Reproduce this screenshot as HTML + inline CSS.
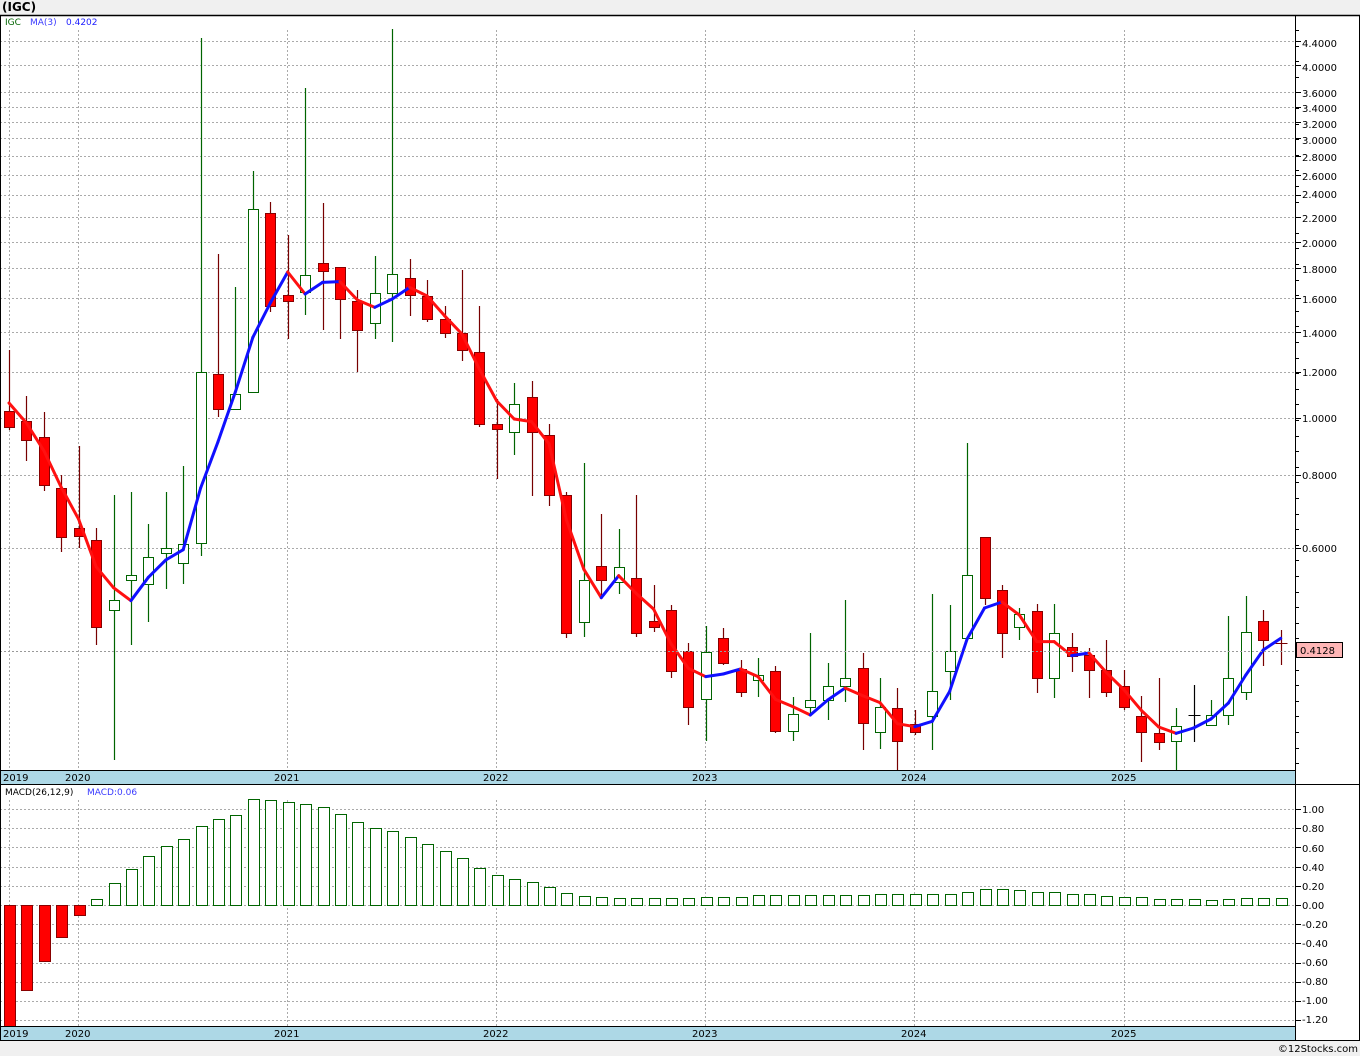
<!DOCTYPE html>
<html><head><meta charset="utf-8"><style>
html,body{margin:0;padding:0;background:#f0f0f0;width:1360px;height:1056px;overflow:hidden;font-family:"Liberation Sans",sans-serif}
svg{position:absolute;left:0;top:0}
text{font-family:"DejaVu Sans","Liberation Sans",sans-serif;font-size:10px}
</style></head><body>
<svg id="s" width="1360" height="1056" xmlns="http://www.w3.org/2000/svg">
<rect x="0" y="15" width="1360" height="1025" fill="#fff"/>
<text x="2" y="11" style="font-size:12px;font-weight:bold" fill="#000">(IGC)</text>
<g id="grid" stroke="#aaa" stroke-width="1" stroke-dasharray="2,2"></g>
<g id="cand"></g>
<g id="ma"></g>
<g id="macd"></g>
<line x1="0" y1="651.5" x2="1295" y2="651.5" stroke="#999" stroke-dasharray="2,2"/>
<rect x="0" y="770" width="1295" height="14" fill="#add8e6"/>
<rect x="0" y="1026" width="1295" height="14" fill="#add8e6"/>
<line x1="0" y1="770.5" x2="1295" y2="770.5" stroke="#000"/>
<line x1="0" y1="1026.5" x2="1295" y2="1026.5" stroke="#000"/>
<line x1="0" y1="15.5" x2="1360" y2="15.5" stroke="#000" stroke-width="1.5"/>
<line x1="0" y1="784.5" x2="1360" y2="784.5" stroke="#000"/>
<line x1="0" y1="1040.5" x2="1360" y2="1040.5" stroke="#000"/>
<line x1="1295.5" y1="15" x2="1295.5" y2="1040" stroke="#000"/>
<line x1="1359.5" y1="15" x2="1359.5" y2="1040" stroke="#000"/>
<line x1="0.5" y1="15" x2="0.5" y2="1040" stroke="#000"/>
<g id="ticks" stroke="#000"></g>
<g fill="#000">
<text x="1302" y="47">4.4000</text><text x="1302" y="71">4.0000</text><text x="1302" y="97">3.6000</text><text x="1302" y="112">3.4000</text><text x="1302" y="128">3.2000</text><text x="1302" y="144">3.0000</text><text x="1302" y="161">2.8000</text><text x="1302" y="180">2.6000</text><text x="1302" y="198">2.4000</text><text x="1302" y="222">2.2000</text><text x="1302" y="247">2.0000</text><text x="1302" y="273">1.8000</text><text x="1302" y="303">1.6000</text><text x="1302" y="337">1.4000</text><text x="1302" y="376">1.2000</text><text x="1302" y="422">1.0000</text><text x="1302" y="479">0.8000</text><text x="1302" y="552">0.6000</text>
<text x="1302" y="813">1.00</text><text x="1302" y="832">0.80</text><text x="1302" y="852">0.60</text><text x="1302" y="871">0.40</text><text x="1302" y="890">0.20</text><text x="1302" y="909">0.00</text><text x="1302" y="928">-0.20</text><text x="1302" y="947">-0.40</text><text x="1302" y="966">-0.60</text><text x="1302" y="985">-0.80</text><text x="1302" y="1004">-1.00</text><text x="1302" y="1023">-1.20</text>
<text x="3" y="781">2019</text><text x="65" y="781">2020</text><text x="274" y="781">2021</text><text x="483" y="781">2022</text><text x="692" y="781">2023</text><text x="901" y="781">2024</text><text x="1111" y="781">2025</text>
<text x="3" y="1037">2019</text><text x="65" y="1037">2020</text><text x="274" y="1037">2021</text><text x="483" y="1037">2022</text><text x="692" y="1037">2023</text><text x="901" y="1037">2024</text><text x="1111" y="1037">2025</text>
</g>
<rect x="1296.5" y="642.5" width="46" height="15" fill="#ffb6b6" stroke="#000"/>
<text x="1300" y="654" fill="#000">0.4128</text>
<text x="5" y="25" fill="#006400" style="font-size:9px">IGC</text>
<text x="30" y="25" fill="#3a3aff" style="font-size:9px">MA(3)</text>
<text x="66" y="25" fill="#2222ff" style="font-size:9px">0.4202</text>
<text x="5" y="795" fill="#000" style="font-size:9px">MACD(26,12,9)</text>
<text x="87" y="795" fill="#3a3aff" style="font-size:9px">MACD:0.06</text>
<text x="1358" y="1052" text-anchor="end" fill="#000" style="font-size:10px">©12Stocks.com</text>
</svg>
<script>
var NS="http://www.w3.org/2000/svg";
function el(p,t,a){var e=document.createElementNS(NS,t);for(var k in a)e.setAttribute(k,a[k]);document.getElementById(p).appendChild(e);return e;}
var pr=[4.4,4.0,3.6,3.4,3.2,3.0,2.8,2.6,2.4,2.2,2.0,1.8,1.6,1.4,1.2,1.0,0.8,0.6];
pr.forEach(function(p){var y=Math.round(418-254.5*Math.log(p))+0.5;el("grid","line",{x1:0,y1:y,x2:1295,y2:y});el("ticks","line",{x1:1295,y1:y,x2:1301,y2:y});});
for(var v=1;v>=-1.2;v-=0.2){var y=Math.round(905-96*v)+0.5;el("grid","line",{x1:0,y1:y,x2:1295,y2:y});el("ticks","line",{x1:1295,y1:y,x2:1301,y2:y});}
for(var y=30;y<770;y+=15.6){el("ticks","line",{x1:1295,y1:Math.round(y)+.5,x2:1299,y2:Math.round(y)+.5});}
[9,78,287,496,705,914,1124].forEach(function(x){el("grid","line",{x1:x+.5,y1:30,x2:x+.5,y2:770});el("grid","line",{x1:x+.5,y1:800,x2:x+.5,y2:1026});});
// [top,bottom,high,low,type]
var C=[[411,427,350,430,'r'],[421,440,396,461,'r'],[437,485,412,491,'r'],[488,537,475,552,'r'],[528,536,446,548,'r'],[540,627,528,645,'r'],
[600,610,495,760,'g'],[575,580,492,645,'g'],[557,584,524,622,'g'],[548,553,492,589,'g'],[544,563,466,584,'g'],[372,543,38,556,'g'],
[374,409,254,417,'r'],[394,409,287,395,'g'],[209,392,171,392,'g'],[213,306,202,312,'r'],[295,301,235,339,'r'],[275,292,88,315,'g'],
[263,271,203,330,'r'],[267,299,267,339,'r'],[301,330,290,372,'r'],[293,323,256,339,'g'],[274,293,29,342,'g'],[278,295,259,316,'r'],
[296,319,280,322,'r'],[319,333,306,338,'r'],[333,350,270,361,'r'],[352,424,306,427,'r'],[424,429,399,479,'r'],[404,432,383,455,'g'],
[397,432,381,496,'r'],[435,495,424,506,'r'],[495,633,492,638,'r'],[580,622,463,637,'g'],[566,580,514,596,'r'],[567,582,529,594,'g'],
[578,633,495,637,'r'],[621,627,585,632,'r'],[610,671,605,678,'r'],[651,707,643,725,'r'],[652,699,626,741,'g'],[638,663,628,665,'r'],
[669,692,660,697,'r'],[675,680,658,697,'g'],[671,731,666,733,'r'],[714,731,697,741,'g'],[700,707,633,715,'g'],[686,700,663,720,'g'],
[678,686,600,702,'g'],[668,723,653,750,'r'],[707,732,678,749,'g'],[708,741,688,770,'r'],[724,732,710,735,'r'],[691,716,594,750,'g'],
[651,671,605,700,'g'],[575,638,443,640,'g'],[537,598,537,605,'r'],[590,633,585,658,'r'],[614,627,608,640,'g'],[611,678,604,693,'r'],
[633,678,604,698,'g'],[647,656,633,672,'r'],[655,670,648,698,'r'],[670,692,640,697,'r'],[686,707,670,710,'r'],[716,732,696,762,'r'],
[733,742,678,750,'r'],[726,741,708,770,'g'],[715,716,685,742,'k'],[715,725,700,725,'g'],[678,715,616,725,'g'],[632,692,596,700,'g'],
[621,640,610,666,'r'],[643,643,630,665,'d']];
var closes=[];
C.forEach(function(c,i){var x=Math.round(9+17.42*i)+.5;var t=c[4];
var col=t=='g'?'#006400':t=='k'?'#000':'#600';
el("cand","line",{x1:x,y1:c[2],x2:x,y2:c[3],stroke:t=='g'?'#006400':t=='k'?'#000':'#700','stroke-width':1.2});
if(t=='k'||t=='d'){el("cand","line",{x1:x-6,y1:c[0]+.5,x2:x+6,y2:c[0]+.5,stroke:t=='k'?'#000':'#700'});}
else el("cand","rect",{x:x-5,y:c[0]+.5,width:10,height:Math.max(c[1]-c[0],2),fill:t=='g'?'#fff':'#f00',stroke:t=='g'?'#006400':'#800','stroke-width':1});
closes.push(t=='g'?c[0]:c[1]);});
var ma=[403,423];for(var i=2;i<C.length;i++)ma.push((closes[i]+closes[i-1]+closes[i-2])/3);
for(var i=1;i<ma.length;i++){var x0=9+17.42*(i-1),x1=9+17.42*i;
el("ma","line",{x1:x0,y1:ma[i-1],x2:x1,y2:ma[i],stroke:ma[i]<ma[i-1]?'#1010ff':'#ff1010','stroke-width':3,'stroke-linecap':'round'});}
var M=[1026,990,961,937,915,899,883,869,856,846,839,826,819,815,799,800,802,804,807,814,822,828,831,837,844,851,858,868,875,879,882,887,893,896,897,
898,898,898,898,898,897,897,897,895,895,895,895,895,895,895,894,894,894,894,894,892,889,889,890,892,892,894,894,896,897,897,899,899,899,900,899,898,898,898];
M.forEach(function(v,i){var x=Math.round(9+17.42*i)-5+.5;
if(v>905)el("macd","rect",{x:x,y:905.5,width:11,height:v-905,fill:'#f00',stroke:'#800'});
else el("macd","rect",{x:x,y:v+.5,width:11,height:905-v,fill:'#fff',stroke:'#006400'});});
</script>
</body></html>
